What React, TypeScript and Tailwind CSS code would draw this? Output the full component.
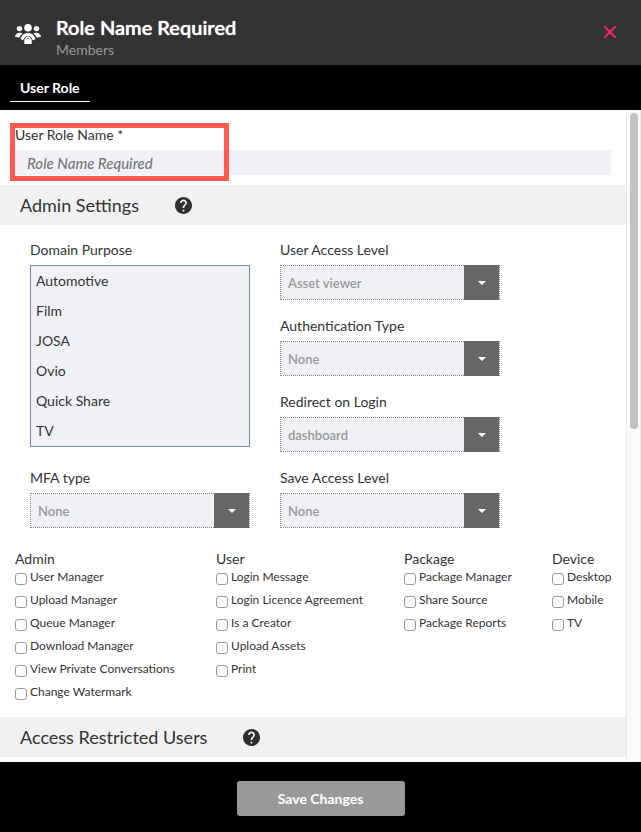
import { useId } from 'react';

const domains = ['Automotive', 'Film', 'JOSA', 'Ovio', 'Quick Share', 'TV'];

const permissionGroups = [
  {
    title: 'Admin',
    items: ['User Manager', 'Upload Manager', 'Queue Manager', 'Download Manager', 'View Private Conversations', 'Change Watermark'],
  },
  { title: 'User', items: ['Login Message', 'Login Licence Agreement', 'Is a Creator', 'Upload Assets', 'Print'] },
  { title: 'Package', items: ['Package Manager', 'Share Source', 'Package Reports'] },
  { title: 'Device', items: ['Desktop', 'Mobile', 'TV'] },
];

function MembersIcon() {
  return (
    <svg viewBox="0 0 26 20" className="mt-2 h-5 w-[26px] shrink-0" fill="#fff" aria-hidden="true">
      <circle cx="13" cy="3.8" r="3.8" />
      <circle cx="4.5" cy="4.6" r="2.7" />
      <circle cx="21.5" cy="4.6" r="2.7" />
      <path d="M0 13.2C.3 10.300 2.200 8.700 4.800 8.700c1.200 0 2.200.3 3 1-1.900 1-3.100 2.300-3.700 4C2.800 13 1.400 12.900 0 13.200Z" />
      <path d="M26 13.200c-.3-2.900-2.200-4.500-4.800-4.500-1.200 0-2.200.3-3 1 1.900 1 3.100 2.300 3.700 4 1.300-.7 2.700-.8 4.100-.5Z" />
      <path d="M5.600 15.200c.6-3.700 3.500-6.200 7.400-6.200s6.800 2.500 7.400 6.200c-1 .6-1.900.9-3 1.100-.3-2.600-2-4.300-4.400-4.300s-4.100 1.700-4.400 4.300c-1.100-.2-2-.5-3-1.100Z" />
      <path d="M10.300 14.600c.3-1.200 1.300-2 2.700-2s2.400.8 2.700 2l1 .9V20H9.300v-4.500Z" />
      <path d="M11.300 15.600c.2-.9.800-1.300 1.700-1.300s1.500.4 1.700 1.300" fill="none" stroke="#555" strokeWidth=".7" />
    </svg>
  );
}

function HelpIcon() {
  return (
    <svg viewBox="2 2 20 20" className="size-[17px]" fill="#2f2f2f" aria-hidden="true">
      <path d="M12 2C6.480 2 2 6.480 2 12s4.480 10 10 10 10-4.480 10-10S17.520 2 12 2zm1 17h-2v-2h2v2zm2.070-7.750-.9.920C13.450 12.900 13 13.500 13 15h-2v-.5c0-1.100.45-2.100 1.170-2.830l1.240-1.260c.37-.36.59-.86.59-1.410 0-1.100-.9-2-2-2s-2 .9-2 2H8c0-2.210 1.790-4 4-4s4 1.790 4 4c0 .88-.36 1.680-.93 2.250z" />
    </svg>
  );
}

function SectionHeader({ title }: { title: string }) {
  return (
    <div className="flex h-10 items-center gap-9 bg-[#f1f1f1] pl-5">
      <h2 className="text-lg">{title}</h2>
      <button type="button" aria-label={`Help: ${title}`}>
        <HelpIcon />
      </button>
    </div>
  );
}

function SelectField({ label, value }: { label: string; value: string }) {
  const id = useId();
  return (
    <div className="flex flex-col gap-[5px]">
      <label htmlFor={id} className="leading-5">{label}</label>
      <div className="relative">
        <select
          id={id}
          defaultValue={value}
          className="block h-[35px] w-full appearance-none border border-dotted border-[#888] bg-[#f0f1f6] pt-[2px] pl-[7px] text-[13px] font-semibold text-[#999] outline-none"
        >
          <option>{value}</option>
        </select>
        <span className="pointer-events-none absolute inset-y-0 right-px flex w-[35px] items-center justify-center bg-[#666]">
          <svg viewBox="0 0 8 4" className="h-1 w-2" fill="#fff" aria-hidden="true">
            <path d="M0 0h8L4 4Z" />
          </svg>
        </span>
      </div>
    </div>
  );
}

export default function App() {
  return (
    <div className="flex h-screen flex-col overflow-hidden bg-white font-['Lato',sans-serif] text-sm text-[#333]">
      <header className="flex h-[65px] shrink-0 items-start bg-[#333] pt-4 pr-6 pl-[15px]">
        <MembersIcon />
        <div className="ml-[15px] flex-1">
          <h1 className="text-xl leading-[22px] font-semibold text-white [text-shadow:0_0_1px_#fff]">Role Name Required</h1>
          <p className="leading-6 text-[#999]">Members</p>
        </div>
        <button type="button" aria-label="Close" className="mt-[9px] flex size-[14px] items-center justify-center">
          <svg viewBox="0 0 12 12" className="size-3" fill="none" stroke="#f5265e" strokeWidth="2" aria-hidden="true">
            <path d="M0 0 12 12M12 0 0 12" />
          </svg>
        </button>
      </header>

      <nav className="h-[45px] shrink-0 bg-black px-[10px] pt-[10px]">
        <a href="#user-role" className="inline-block border-b border-white px-[10px] pt-[3px] pb-[3px] leading-5 font-bold text-white">
          User Role
        </a>
      </nav>

      <div className="flex min-h-0 flex-1">
        <main className="min-w-0 flex-1 overflow-hidden">
          <div className="relative flex flex-col gap-[6px] pt-4 pr-[15px] pb-[10px] pl-[15px]">
            <label htmlFor="role-name" className="leading-[18px]">User Role Name *</label>
            <input
              id="role-name"
              type="text"
              placeholder="Role Name Required"
              className="h-[25px] w-full bg-[#f0f1f6] px-3 text-[15px] font-medium italic outline-none placeholder:text-[#777]"
            />
            <div className="pointer-events-none absolute top-[13px] left-[10px] h-[58px] w-[219px] border-5 border-[#ff5a4d]" />
          </div>

          <SectionHeader title="Admin Settings" />

          <div className="grid grid-cols-[220px_220px] gap-x-[30px] gap-y-4 px-[30px] pt-[15px]">
            <div className="row-span-3 flex flex-col gap-[5px]">
              <label htmlFor="domains" className="leading-5">Domain Purpose</label>
              <select
                id="domains"
                multiple
                size={6}
                className="block h-[182px] w-full overflow-hidden border border-[#7388a5] bg-[#f0f1f6] outline-none"
              >
                {domains.map((name) => (
                  <option key={name} className="h-[30px] px-[5px] pt-[6px] pb-[4px] leading-5">{name}</option>
                ))}
              </select>
            </div>
            <SelectField label="User Access Level" value="Asset viewer" />
            <SelectField label="Authentication Type" value="None" />
            <SelectField label="Redirect on Login" value="dashboard" />
            <SelectField label="MFA type" value="None" />
            <SelectField label="Save Access Level" value="None" />
          </div>

          <div className="grid grid-cols-[201fr_188fr_148fr_74fr] pt-[22px] pb-[11px] pl-[15px]">
            {permissionGroups.map((group) => (
              <fieldset key={group.title} className="min-w-0">
                <legend className="leading-[18px]">{group.title}</legend>
                {group.items.map((item) => (
                  <label key={item} className="flex h-[23px] items-start gap-[3px] text-xs leading-[18px] whitespace-nowrap">
                    <input
                      type="checkbox"
                      className="mt-[5px] size-3 shrink-0 appearance-none rounded-[3px] border border-[#999] bg-white checked:bg-[#666]"
                    />
                    {item}
                  </label>
                ))}
              </fieldset>
            ))}
          </div>

          <SectionHeader title="Access Restricted Users" />
        </main>

        <div className="w-[15px] shrink-0 border-x border-[#e8e8e8] bg-[#fafafa] pt-[3px] pl-[3px]" aria-hidden="true">
          <div className="h-[316px] w-2 rounded-full bg-[#c1c1c1]" />
        </div>
      </div>

      <footer className="flex h-[70px] shrink-0 justify-center bg-black pt-[19px]">
        <button type="button" className="h-[35px] w-[168px] rounded-[3px] bg-[#999] font-bold text-white">
          Save Changes
        </button>
      </footer>
    </div>
  );
}
